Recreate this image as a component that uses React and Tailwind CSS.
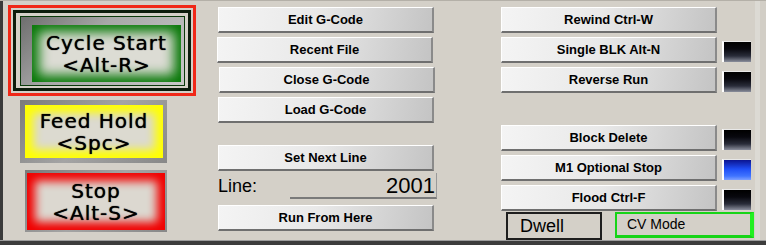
import React from "react";

const btn =
    "h-[26px] w-[216px] flex items-center justify-center text-[13px] font-bold text-black " +
    "border-t border-l border-t-white border-l-white border-b-2 border-r-2 border-b-[#6f6f6f] border-r-[#8a8a8a] " +
    "bg-[linear-gradient(100deg,#f4f4f4_0%,#e9e9e9_45%,#c4c4c4_100%)]";

function Button({ children, className = "" }) {
    return <div className={btn + " " + className}>{children}</div>;
}

function Led({ on }) {
    if (on) {
        return (
            <div className="mt-[4px] h-[21px] w-[29px] border-l-2 border-t border-l-white border-t-[#e8e8e8] bg-[linear-gradient(to_bottom,#0b1490_0%,#1f4ef5_45%,#3f74ff_80%,#7ea0ff_100%)]" />
        );
    }
    return (
        <div className="mt-[4px] h-[21px] w-[29px] border-l-2 border-t border-l-white border-t-[#e8e8e8] bg-[linear-gradient(to_bottom,#000_0%,#08080e_35%,#2a2d3a_70%,#8a8e9c_100%)]" />
    );
}

function BigLabel({ top, bottom }) {
    return (
        <div className="flex flex-col items-center leading-[22px] text-[20px] tracking-[1px] text-black font-['DejaVu_Sans',Verdana,sans-serif] [text-shadow:0_0_1px_#000]">
            <span>{top}</span>
            <span>{bottom}</span>
        </div>
    );
}

export default function App() {
    return (
        <div className="w-[766px] h-[245px] bg-[#d4d0c8] flex flex-col overflow-hidden font-['Liberation_Sans',Arial,sans-serif]">
            <div className="flex flex-1 min-h-0 border-t border-[#b4b0a8]">
                {/* left dark edge */}
                <div className="w-[3px] bg-[#3a3a3a]" />

                {/* big machine buttons */}
                <div className="w-[214px] flex flex-col">
                    <div className="ml-[5px] mt-[4px] w-[188px] h-[91px] border-[3px] border-[#f02818] p-[2px]">
                        <div className="h-full border-[3px] border-[#0c1c0c] pl-[4px] pt-[3px] pr-[3px] pb-[2px]">
                            <div className="h-full border border-[#0a3a0a] bg-[linear-gradient(135deg,#6e6e6e_0%,#a8a8a8_40%,#c8c8c8_100%)] pl-[11px] pt-[8px] pr-[3px] pb-[3px]">
                                <div className="h-full flex items-center justify-center bg-[#dcdcd4] shadow-[inset_0_0_12px_7px_#087808]">
                                    <BigLabel top="Cycle Start" bottom="<Alt-R>" />
                                </div>
                            </div>
                        </div>
                    </div>

                    <div className="ml-[17px] mt-[4px] w-[147px] h-[63px] bg-[linear-gradient(135deg,#7a7a7a_0%,#a4a4a4_50%,#888_100%)] pl-[5px] pt-[5px] pr-[4px] pb-[5px]">
                        <div className="h-full flex items-center justify-center bg-[#dcdad0] shadow-[inset_0_0_10px_8px_#ffff00]">
                            <BigLabel top="Feed Hold" bottom="<Spc>" />
                        </div>
                    </div>

                    <div className="ml-[22px] mt-[7px] w-[142px] h-[62px] bg-[linear-gradient(135deg,#7a7a7a_0%,#a4a4a4_50%,#888_100%)] pl-[2px] pt-[3px] pr-[2px] pb-[2px]">
                        <div className="h-full flex items-center justify-center bg-[#dcd8d0] shadow-[inset_0_0_10px_8px_#f00000]">
                            <BigLabel top="Stop" bottom="<Alt-S>" />
                        </div>
                    </div>
                </div>

                {/* file column */}
                <div className="w-[220px] flex flex-col pt-[6px]">
                    <Button className="ml-[1px]">Edit G-Code</Button>
                    <Button className="mt-[4px]">Recent File</Button>
                    <Button className="mt-[4px] ml-[2px]">Close G-Code</Button>
                    <Button className="mt-[4px] ml-[1px]">Load G-Code</Button>
                    <Button className="mt-[22px] ml-[1px]">Set Next Line</Button>
                    <div className="mt-[2px] h-[26px] flex items-center justify-between">
                        <span className="text-[18px] text-black pl-[1px]">Line:</span>
                        <div className="h-[26px] w-[147px] border-b-2 border-r border-b-[#7a7a7a] border-r-[#9a9a9a] flex items-center justify-end pr-[1px] text-[22px] text-black">
                            2001
                        </div>
                    </div>
                    <Button className="mt-[6px] ml-[1px]">Run From Here</Button>
                </div>

                {/* spacer */}
                <div className="w-[64px]" />

                {/* program control column */}
                <div className="w-[254px] flex flex-col pt-[6px]">
                    <div className="flex items-start gap-[5px]">
                        <Button>Rewind Ctrl-W</Button>
                    </div>
                    <div className="mt-[4px] flex items-start gap-[5px]">
                        <Button>Single BLK Alt-N</Button>
                        <Led />
                    </div>
                    <div className="mt-[4px] flex items-start gap-[5px]">
                        <Button>Reverse Run</Button>
                        <Led />
                    </div>
                    <div className="mt-[32px] flex items-start gap-[5px]">
                        <Button>Block Delete</Button>
                        <Led />
                    </div>
                    <div className="mt-[4px] flex items-start gap-[5px]">
                        <Button>M1 Optional Stop</Button>
                        <Led on />
                    </div>
                    <div className="mt-[4px] flex items-start gap-[5px]">
                        <Button>Flood Ctrl-F</Button>
                        <Led />
                    </div>
                    <div className="mt-[1px] flex items-start">
                        <div className="ml-[5px] w-[96px] h-[28px] border-2 border-[#1e1e1e] flex items-center pl-[12px] text-[18px] text-black">
                            Dwell
                        </div>
                        <div className="ml-[13px] w-[139px] h-[26px] border-2 border-r-[4px] border-b-[3px] border-[#17d417] border-r-[#22f022] flex items-center pl-[10px] text-[14px] text-black">
                            CV Mode
                        </div>
                    </div>
                </div>

                {/* right edge */}
                <div className="w-[11px] border-l-[5px] border-[#dcdad4] bg-[#d2cec6]" />
            </div>
            <div className="h-[5px] bg-[#3c3c3c] border-t border-[#9c9c9c]" />
        </div>
    );
}
